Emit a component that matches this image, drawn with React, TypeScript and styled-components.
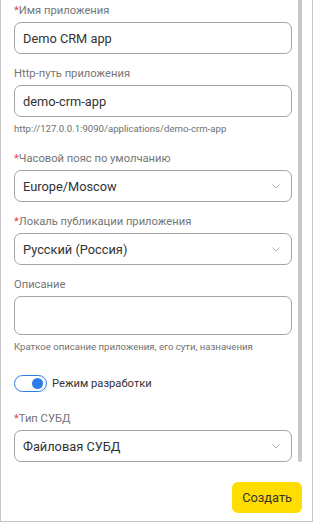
import React from "react";
import styled, { createGlobalStyle } from "styled-components";

const font = `Roboto, "Liberation Sans", Arial, sans-serif`;

const GlobalStyle = createGlobalStyle`
  html, body {
    margin: 0;
    padding: 0;
    background: #ffffff;
  }
  body {
    font-family: ${font};
  }
  * {
    box-sizing: border-box;
  }
`;

const Frame = styled.div`
  width: 313px;
  height: 522px;
  border: 1px solid #c6c6c6;
  border-top: none;
  display: flex;
  flex-direction: column;
  background: #fff;
`;

const ScrollArea = styled.div`
  height: 470px;
  display: flex;
  padding-right: 10px;
  overflow: hidden;
`;

const Content = styled.div`
  flex: 1;
  padding: 3px 6px 0 13px;
  display: flex;
  flex-direction: column;
`;

const ScrollThumb = styled.div`
  width: 4px;
  height: 462px;
  background: #c8c8c8;
  border-radius: 0 0 2px 2px;
`;

const Field = styled.div<{ $gap?: number }>`
  display: flex;
  flex-direction: column;
  margin-bottom: ${(p) => p.$gap ?? 12}px;
`;

const Label = styled.label`
  font-size: 11.2px;
  line-height: 16px;
  color: #757575;
  margin-bottom: 3px;
`;

const Star = styled.span`
  color: #e8453c;
`;

const Input = styled.div`
  height: 32px;
  border: 1px solid #a3a3a3;
  border-radius: 7px;
  padding: 0 11px 0 8px;
  display: flex;
  align-items: center;
  font-size: 12.8px;
  color: #333;
`;

const Area = styled(Input)`
  height: 39px;
`;

const Value = styled.span`
  flex: 1;
`;

const Hint = styled.div`
  font-size: 9.6px;
  line-height: 14px;
  color: #707070;
  margin-top: 5px;
  padding-bottom: 2px;
`;

const ToggleRow = styled.div`
  display: flex;
  align-items: center;
  gap: 5px;
  margin: 7px 0 19px;
  font-size: 11.2px;
  color: #333;
`;

const Switch = styled.div`
  width: 33px;
  height: 17px;
  border: 1.5px solid #2b7de9;
  border-radius: 9px;
  display: flex;
  align-items: center;
  justify-content: flex-end;
  padding-right: 3px;
`;

const Knob = styled.div`
  width: 11px;
  height: 11px;
  border-radius: 50%;
  background: #2b7de9;
`;

const Footer = styled.div`
  flex: 1;
  display: flex;
  justify-content: flex-end;
  align-items: flex-start;
  padding: 12px 10px 0 0;
`;

const Button = styled.button`
  height: 31px;
  padding: 0 10px;
  border: none;
  border-radius: 6px;
  background: #ffdd00;
  font-family: ${font};
  font-size: 12.8px;
  color: #333;
  cursor: pointer;
`;

const Chevron = () => (
  <svg width="8" height="5" viewBox="0 0 8 5" fill="none">
    <path d="M0.5 0.5 L4 4 L7.5 0.5" stroke="#b0b0b0" strokeWidth="1" />
  </svg>
);

const Select: React.FC<{ value: string }> = ({ value }) => (
  <Input>
    <Value>{value}</Value>
    <Chevron />
  </Input>
);

const App: React.FC = () => {
  return (
    <>
      <GlobalStyle />
      <Frame>
        <ScrollArea>
          <Content>
            <Field>
              <Label>
                <Star>*</Star>Имя приложения
              </Label>
              <Input>
                <Value>Demo CRM app</Value>
              </Input>
            </Field>
            <Field $gap={13}>
              <Label>Http-путь приложения</Label>
              <Input>
                <Value>demo-crm-app</Value>
              </Input>
              <Hint>http://127.0.0.1:9090/applications/demo-crm-app</Hint>
            </Field>
            <Field>
              <Label>
                <Star>*</Star>Часовой пояс по умолчанию
              </Label>
              <Select value="Europe/Moscow" />
            </Field>
            <Field>
              <Label>
                <Star>*</Star>Локаль публикации приложения
              </Label>
              <Select value="Русский (Россия)" />
            </Field>
            <Field>
              <Label>Описание</Label>
              <Area />
              <Hint>Краткое описание приложения, его сути, назначения</Hint>
            </Field>
            <ToggleRow>
              <Switch>
                <Knob />
              </Switch>
              Режим разработки
            </ToggleRow>
            <Field $gap={0}>
              <Label>
                <Star>*</Star>Тип СУБД
              </Label>
              <Select value="Файловая СУБД" />
            </Field>
          </Content>
          <ScrollThumb />
        </ScrollArea>
        <Footer>
          <Button>Создать</Button>
        </Footer>
      </Frame>
    </>
  );
};

export default App;
